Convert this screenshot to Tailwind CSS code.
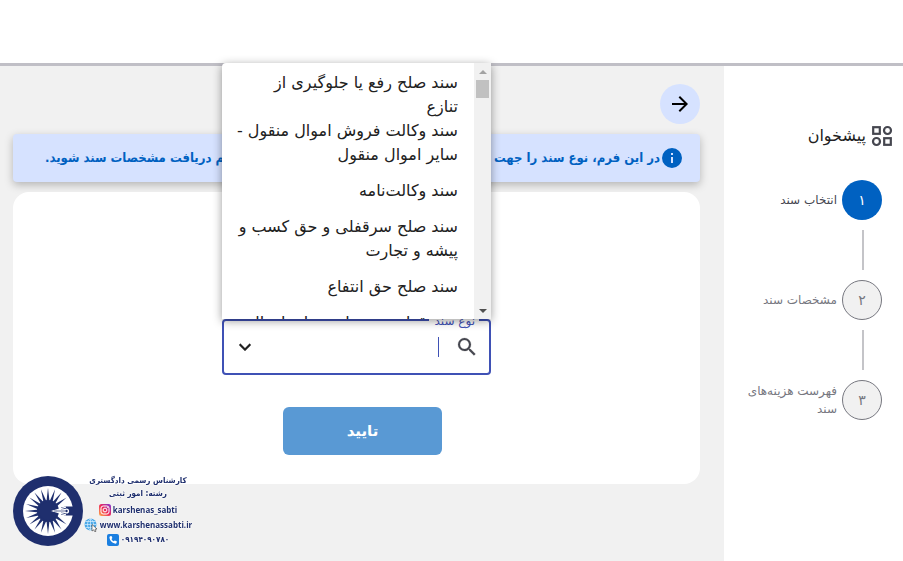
<!DOCTYPE html>
<html lang="fa" dir="rtl">
<head>
  <meta charset="UTF-8">
  <meta name="viewport" content="width=device-width, initial-scale=1.0">
  <title>انتخاب سند</title>
  <script src="https://cdn.jsdelivr.net/npm/@tailwindcss/browser@4"></script>
</head>
<body class="min-h-screen flex flex-col bg-white text-[#212121] font-['DejaVu_Sans',sans-serif] overflow-hidden">
  <header class="h-[66px] shrink-0 bg-white border-b-3 border-[#c0bfc6]"></header>

  <div class="flex flex-1">
    <!-- Sidebar -->
    <aside class="w-[179px] shrink-0 bg-white pt-14 pr-[9px] pl-4">
      <a href="#" class="flex items-center gap-1 h-7 text-base">
        <svg class="w-6 h-6 shrink-0" viewBox="0 0 24 24" fill="none" stroke="#45464f" stroke-width="2.2">
          <rect x="3.2" y="3.2" width="6.6" height="6.6"/>
          <circle cx="17.5" cy="6.5" r="3.5"/>
          <circle cx="6.5" cy="17.5" r="3.5"/>
          <rect x="14.2" y="14.2" width="6.6" height="6.6"/>
        </svg>
        پیشخوان
      </a>

      <ol class="mt-[30px] pr-3 text-xs text-[#76777f]">
        <li>
          <div class="flex items-center gap-[5px] text-[#45464f]">
            <span class="w-10 h-10 shrink-0 rounded-full bg-[#0061c1] text-white text-sm flex items-center justify-center">۱</span>
            انتخاب سند
          </div>
          <div class="w-0.5 h-10 my-2.5 mr-[18px] bg-[#c4c4c8]"></div>
        </li>
        <li>
          <div class="flex items-center gap-[5px]">
            <span class="w-10 h-10 shrink-0 rounded-full bg-[#f1f1f1] border border-[#76777f] text-sm flex items-center justify-center">۲</span>
            مشخصات سند
          </div>
          <div class="w-0.5 h-10 my-2.5 mr-[18px] bg-[#c4c4c8]"></div>
        </li>
        <li class="flex items-center gap-[5px] leading-[18px]">
          <span class="w-10 h-10 shrink-0 rounded-full bg-[#f1f1f1] border border-[#76777f] text-sm flex items-center justify-center">۳</span>
          <span class="whitespace-nowrap">فهرست هزینه‌های<br>سند</span>
        </li>
      </ol>
    </aside>

    <!-- Main -->
    <main class="flex-1 min-w-0 bg-[#f1f1f1] pt-[18px] pr-6 pl-[13px]">
      <button type="button" aria-label="بازگشت" class="w-10 h-10 rounded-full bg-[#d6e2ff] flex items-center justify-center">
        <svg class="w-6 h-6" viewBox="0 0 24 24" fill="#000">
          <path d="M12 4l-1.41 1.41L16.17 11H4v2h12.17l-5.58 5.59L12 20l8-8z"/>
        </svg>
      </button>

      <div class="mt-2.5 h-12 pr-4 pl-8 rounded bg-[#d6e2ff] shadow-[0_3px_8px_rgba(0,0,0,0.25)] flex items-center text-[#0061c1] text-[13px] font-bold font-['DejaVu_Sans_Condensed','DejaVu_Sans',sans-serif] whitespace-nowrap">
        <svg class="w-6 h-6 shrink-0" viewBox="0 0 24 24" fill="#0061c1">
          <path d="M12 2a10 10 0 100 20 10 10 0 000-20zm1 15h-2v-6h2v6zm0-8h-2V7h2v2z"/>
        </svg>
        <p class="flex-1 flex justify-between">
          <span>در این فرم، نوع سند را جهت مشخص</span>
          <span>اعلام دریافت مشخصات سند شوید.</span>
        </p>
      </div>

      <form class="mt-2.5 pt-[127px] pb-[29px] rounded-2xl bg-white flex flex-col items-center">
        <div class="relative w-[269px]">
          <div class="h-14 rounded border-2 border-[#3f51b5] flex items-center pr-2.5 pl-[9px]">
            <svg class="w-6 h-6 shrink-0" viewBox="0 0 24 24" fill="#45464f" stroke="#45464f" stroke-width="0.2">
              <path d="M15.5 14h-.79l-.28-.27A6.47 6.47 0 0016 9.5 6.5 6.5 0 109.5 16c1.61 0 3.09-.59 4.23-1.57l.27.28v.79l5 4.99L20.49 19l-4.99-5zm-6 0C7.01 14 5 11.99 5 9.5S7.01 5 9.5 5 14 7.01 14 9.5 11.99 14 9.5 14z"/>
            </svg>
            <span class="w-px h-5 mr-4 bg-[#3f51b5]"></span>
            <input id="docType" type="text" role="combobox" aria-expanded="true" aria-controls="docTypeList" class="flex-1 min-w-0 h-8 bg-transparent outline-none">
            <svg class="w-6 h-6 shrink-0" viewBox="0 0 24 24" fill="#212121" stroke="#212121" stroke-width="0.2">
              <path d="M7.41 8.59L12 13.17l4.59-4.58L18 10l-6 6-6-6z"/>
            </svg>
          </div>
          <label for="docType" class="absolute -top-1.5 right-3 pr-1 pl-1.5 bg-white text-xs leading-4 text-[#3f51b5]">نوع سند</label>

          <!-- open list -->
          <div class="absolute z-10 bottom-14 inset-x-0 h-64 flex bg-white rounded-t shadow-[0_2px_10px_rgba(0,0,0,0.4)]">
            <div class="w-[17px] shrink-0 bg-[#f1f1f1] flex flex-col items-center">
              <span class="h-[17px] flex items-center"><span class="border-x-4 border-b-4 border-x-transparent border-b-[#a3a3a3]"></span></span>
              <span class="w-[13px] h-[18px] bg-[#c1c1c1]"></span>
              <span class="h-[17px] mt-auto flex items-center"><span class="border-x-4 border-t-4 border-x-transparent border-t-[#505050]"></span></span>
            </div>
            <ul id="docTypeList" role="listbox" class="flex-1 pt-2 text-base leading-6 whitespace-nowrap overflow-hidden">
              <li role="option" class="min-h-12 px-4 flex items-center"><span>سند صلح رفع یا جلوگیری از<br>تنازع</span></li>
              <li role="option" class="min-h-12 px-4 flex items-center"><span>سند وکالت فروش اموال منقول -<br>سایر اموال منقول</span></li>
              <li role="option" class="min-h-12 px-4 flex items-center">سند وکالت‌نامه</li>
              <li role="option" class="min-h-12 px-4 flex items-center"><span>سند صلح سرقفلی و حق کسب و<br>پیشه و تجارت</span></li>
              <li role="option" class="min-h-12 px-4 flex items-center">سند صلح حق انتفاع</li>
              <li role="option" class="min-h-12 px-4 flex items-center"><span>سند قطعی منقول - سایر اموال<br>منقول</span></li>
            </ul>
          </div>
        </div>

        <button type="button" class="mt-8 ml-3 w-[159px] h-12 rounded-md bg-[#5999d4] text-white text-[15px] font-bold">تایید</button>
      </form>
    </main>
  </div>

  <!-- Watermark -->
  <div dir="ltr" class="fixed left-3 bottom-3.5 flex items-center gap-0.5 text-[#1f2f6e] font-bold">
    <svg class="w-[72px] h-[72px] shrink-0" viewBox="0 0 72 72">
      <circle cx="36" cy="36" r="35" fill="#1f2f6e"/>
      <circle cx="36" cy="36" r="25" fill="#fff"/>
      <g fill="#1f2f6e">
        <circle cx="36" cy="36" r="11"/>
        <path d="M34.4 27L36 13l1.6 14z"/>
        <path d="M34.4 27L36 13l1.6 14z" transform="rotate(18 36 36)"/>
        <path d="M34.4 27L36 13l1.6 14z" transform="rotate(36 36 36)"/>
        <path d="M34.4 27L36 13l1.6 14z" transform="rotate(54 36 36)"/>
        <path d="M34.4 27L36 13l1.6 14z" transform="rotate(126 36 36)"/>
        <path d="M34.4 27L36 13l1.6 14z" transform="rotate(144 36 36)"/>
        <path d="M34.4 27L36 13l1.6 14z" transform="rotate(162 36 36)"/>
        <path d="M34.4 27L36 13l1.6 14z" transform="rotate(180 36 36)"/>
        <path d="M34.4 27L36 13l1.6 14z" transform="rotate(198 36 36)"/>
        <path d="M34.4 27L36 13l1.6 14z" transform="rotate(216 36 36)"/>
        <path d="M34.4 27L36 13l1.6 14z" transform="rotate(234 36 36)"/>
        <path d="M34.4 27L36 13l1.6 14z" transform="rotate(252 36 36)"/>
        <path d="M34.4 27L36 13l1.6 14z" transform="rotate(270 36 36)"/>
        <path d="M34.4 27L36 13l1.6 14z" transform="rotate(288 36 36)"/>
        <path d="M34.4 27L36 13l1.6 14z" transform="rotate(306 36 36)"/>
        <path d="M34.4 27L36 13l1.6 14z" transform="rotate(324 36 36)"/>
        <path d="M34.4 27L36 13l1.6 14z" transform="rotate(342 36 36)"/>
        <path d="M54 31.500h10v9H54l-5-1v-7z"/>
      </g>
      <!-- pen nib -->
      <path d="M39 36l15-4.500v1.200L43 36l11 3.300v1.200z" fill="#fff"/>
      <path d="M40 36l10-1.800 3-.2h3v4h-3l-3-.2z" fill="#fff"/>
      <circle cx="54.500" cy="36" r="2.600" fill="#fff"/>
      <circle cx="54.500" cy="36" r="1.200" fill="#1f2f6e"/>
      <path d="M42 36h11" stroke="#1f2f6e" stroke-width="0.700"/>
    </svg>
    <div class="w-[104px] flex flex-col items-center text-[8px] leading-[15px] whitespace-nowrap font-['Open_Sans','DejaVu_Sans_Condensed',sans-serif] [text-shadow:0_0_2px_#fff,0_0_2px_#fff]">
      <span dir="rtl" class="leading-[13px] font-['DejaVu_Sans_Condensed','DejaVu_Sans',sans-serif]">کارشناس رسمی دادگستری</span>
      <span dir="rtl" class="leading-[13px] font-['DejaVu_Sans_Condensed','DejaVu_Sans',sans-serif]">رشته: امور ثبتی</span>
      <span class="mt-0.5 flex items-center gap-0.5">
        <svg class="w-3 h-3" viewBox="0 0 12 12">
          <defs>
            <linearGradient id="insta" x1="0" y1="1" x2="1" y2="0">
              <stop offset="0" stop-color="#fdb14b"/>
              <stop offset="0.5" stop-color="#ee2a5b"/>
              <stop offset="1" stop-color="#7b35d8"/>
            </linearGradient>
          </defs>
          <rect width="12" height="12" rx="2.500" fill="url(#insta)"/>
          <rect x="2" y="2" width="8" height="8" rx="2.200" fill="none" stroke="#fff"/>
          <circle cx="6" cy="6" r="1.900" fill="none" stroke="#fff"/>
          <circle cx="8.400" cy="3.600" r="0.500" fill="#fff"/>
        </svg>
        karshenas_sabti
      </span>
      <span class="flex items-center gap-0.5">
        <svg class="w-[14px] h-[14px]" viewBox="0 0 14 14">
          <circle cx="6.500" cy="6.500" r="6" fill="#4ba9e8"/>
          <path d="M6.500 .5v12M.5 6.500h12M1.500 3.500h10M1.500 9.500h10M6.500 .5c-4 3-4 9 0 12M6.500 .5c4 3 4 9 0 12" fill="none" stroke="#d9efff" stroke-width="0.700"/>
          <path d="M8 6.500l5 4.500-2 .2 1 2-1.200.6-1-2L8 13z" fill="#fff" stroke="#333" stroke-width="0.600"/>
        </svg>
        www.karshenassabti.ir
      </span>
      <span class="flex items-center gap-0.5">
        <svg class="w-3 h-3" viewBox="0 0 12 12">
          <rect width="12" height="12" rx="2" fill="#1b7fe0"/>
          <path d="M3.200 2.200l1.300-.2.900 2-.9.900c.4 1 1.300 1.900 2.300 2.400l.9-.9 2.100.9-.2 1.400c-.2.700-.9 1.100-1.700.9C5 8.900 3 6.800 2.500 4c-.1-.8.100-1.500.7-1.800z" fill="#fff"/>
        </svg>
        <span class="font-['DejaVu_Sans_Condensed','DejaVu_Sans',sans-serif]">۰۹۱۹۴۰۹۰۷۸۰</span>
      </span>
    </div>
  </div>
</body>
</html>
